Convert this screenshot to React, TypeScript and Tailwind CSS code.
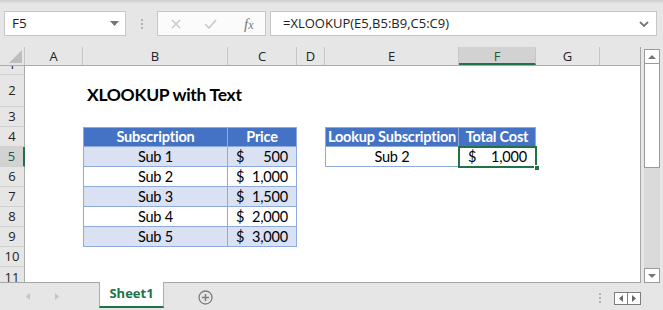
import React from "react";

const UI = { fontFamily: '"Open Sans", "Noto Sans", sans-serif' };
const CELL = { fontFamily: 'Lato, "Liberation Sans", sans-serif', letterSpacing: "-0.2px" };

const colW = [58, 145, 69, 28, 134, 77, 64];
const letters = ["A", "B", "C", "D", "E", "F", "G", "H"];

type CellSpec = {
  content?: React.ReactNode;
  cls?: string;
};

function Money({ v }: { v: string }) {
  return (
    <div className="flex w-full items-center justify-between px-2">
      <span>$</span>
      <span>{v}</span>
    </div>
  );
}

const blue = "bg-[#d9e1f2]";
const bd = "border-[#8ea9db]";

function rowCells(r: number): (CellSpec | null)[] {
  const cells: (CellSpec | null)[] = [null, null, null, null, null, null, null];
  if (r === 2) {
    cells[1] = {
      content: (
        <span className="whitespace-nowrap pl-[4px] pb-[3px] text-[17.5px] font-bold tracking-[-0.3px]" style={{ fontFamily: CELL.fontFamily }}>
          XLOOKUP with Text
        </span>
      ),
      cls: "items-end overflow-visible",
    };
  }
  if (r === 4) {
    const h = `bg-[#4472c4] text-white font-bold justify-center whitespace-nowrap border-b border-r ${bd}`;
    cells[1] = { content: "Subscription", cls: `${h} border-l border-t` };
    cells[2] = { content: "Price", cls: `${h} border-t` };
    cells[4] = { content: "Lookup Subscription", cls: `${h} border-l border-t` };
    cells[5] = { content: "Total Cost", cls: `${h} border-t` };
  }
  const data: Record<number, [string, string]> = {
    5: ["Sub 1", "500"],
    6: ["Sub 2", "1,000"],
    7: ["Sub 3", "1,500"],
    8: ["Sub 4", "2,000"],
    9: ["Sub 5", "3,000"],
  };
  if (data[r]) {
    const bg = r % 2 === 1 ? blue : "bg-white";
    cells[1] = { content: data[r][0], cls: `${bg} justify-center border-l border-b border-r ${bd}` };
    cells[2] = { content: <Money v={data[r][1]} />, cls: `${bg} border-b border-r ${bd}` };
  }
  if (r === 5) {
    cells[4] = { content: "Sub 2", cls: `bg-white justify-center border-l border-b border-r ${bd}` };
    cells[5] = {
      content: (
        <>
          <div className="w-full pl-[1px] pr-[1px]">
            <Money v="1,000" />
          </div>
          <div className="absolute left-[-1px] top-[-1px] h-[22px] w-[79px] border-2 border-[#217346]" />
          <div className="absolute bottom-[-4px] right-[-4px] h-[6px] w-[6px] border border-white bg-[#217346]" />
        </>
      ),
      cls: "relative bg-white",
    };
  }
  return cells;
}

function GridRow({ r, h, align }: { r: number; h: number; align: "top" | "bottom" | "mid" }) {
  const cells = rowCells(r);
  const sel = r === 5;
  return (
    <div className="flex" style={{ height: h }}>
      <div
        className={`flex w-[25px] shrink-0 justify-center overflow-hidden border-b border-r border-b-[#d0d0d0] ${
          sel ? "border-r-2 border-r-[#217346] bg-[#d2d2d2] text-[#1e5b3e]" : "border-r-[#ababab] bg-[#e6e6e6] text-[#222]"
        } ${align === "bottom" ? "items-end" : align === "top" ? "items-start" : "items-center"}`}
        style={UI}
      >
        <div className="flex h-[20px] shrink-0 items-center text-[13px] leading-none">{r}</div>
      </div>
      {colW.map((w, i) => {
        const c = cells[i];
        return (
          <div
            key={i}
            className={`flex shrink-0 items-center text-[14.5px] leading-[18px] text-black ${c?.cls ?? ""}`}
            style={{ width: w, ...CELL }}
          >
            {c?.content}
          </div>
        );
      })}
    </div>
  );
}

function Dots({ className = "" }: { className?: string }) {
  return (
    <div className={`flex flex-col items-center gap-[2px] ${className}`}>
      <div className="h-[2px] w-[2px] bg-[#b4b4b4]" />
      <div className="h-[2px] w-[2px] bg-[#b4b4b4]" />
      <div className="h-[2px] w-[2px] bg-[#b4b4b4]" />
    </div>
  );
}

export default function App() {
  return (
    <div className="relative h-[310px] w-[663px] overflow-hidden bg-[#e6e6e6]">
      {/* Formula bar area */}
      <div className="h-[47px] bg-[linear-gradient(#cfcfcf_0px,#e6e6e6_4px)]">
        <div className="flex pt-[11px]">
          <div className="ml-[4px] flex h-[25px] w-[122px] items-center justify-between border border-[#c6c6c6] bg-white pl-[7px] pr-[6px]" style={UI}>
            <span className="text-[13.5px] text-[#222]">F5</span>
            <svg width="9" height="5" viewBox="0 0 9 5">
              <path d="M0 0 L9 0 L4.5 5 Z" fill="#777" />
            </svg>
          </div>
          <div className="flex w-[31px] items-center justify-center">
            <Dots />
          </div>
          <div className="relative h-[25px] w-[109px] border border-[#c6c6c6] bg-[#fbfbfb]">
            <svg className="absolute left-[13px] top-[7px]" width="10" height="10" viewBox="0 0 10 10">
              <path d="M1 1 L9 9 M9 1 L1 9" stroke="#c8c8c8" strokeWidth="1.4" fill="none" />
            </svg>
            <svg className="absolute left-[46px] top-[7px]" width="13" height="10" viewBox="0 0 13 10">
              <path d="M1 5 L5 9 L12 1" stroke="#c8c8c8" strokeWidth="1.6" fill="none" />
            </svg>
            <span
              className="absolute left-[86px] top-[1px] text-[15px] italic text-[#777]"
              style={{ fontFamily: '"Liberation Serif", serif' }}
            >
              f<span className="text-[12px]">x</span>
            </span>
          </div>
          <div className="ml-[4px] flex h-[25px] w-[387px] items-center justify-between border border-[#c6c6c6] bg-white pl-[12px] pr-[7px]" style={UI}>
            <span className="text-[13px] text-[#222]">=XLOOKUP(E5,B5:B9,C5:C9)</span>
            <svg width="10" height="6" viewBox="0 0 10 6">
              <path d="M1 1 L5 5 L9 1" stroke="#777" strokeWidth="1.8" fill="none" />
            </svg>
          </div>
        </div>
      </div>

      {/* Sheet area */}
      <div className="flex h-[236px]">
        <div className="h-[236px] w-[641px] shrink-0 overflow-hidden border-r border-b border-[#a6a6a6] bg-white">
          {/* column headers */}
          <div className="flex h-[19px] border-b border-[#ababab] bg-[#e6e6e6]" style={UI}>
            <div className="relative w-[25px] shrink-0 border-r border-[#c6c6c6]">
              <svg className="absolute bottom-[2px] right-[2px]" width="13" height="13" viewBox="0 0 13 13">
                <path d="M13 0 L13 13 L0 13 Z" fill="#bdbdbd" />
              </svg>
            </div>
            {colW.map((w, i) => (
              <div
                key={i}
                className={`flex shrink-0 items-center justify-center border-r text-[13px] leading-none ${
                  i === 5
                    ? "border-b-2 border-b-[#217346] border-r-[#c6c6c6] bg-[#d2d2d2] pt-[2px] text-[#1e5b3e]"
                    : "border-[#c6c6c6] text-[#222]"
                }`}
                style={{ width: w }}
              >
                {letters[i]}
              </div>
            ))}
          </div>
          <GridRow r={1} h={9} align="bottom" />
          <GridRow r={2} h={32} align="mid" />
          {[3, 4, 5, 6, 7, 8, 9, 10].map((r) => (
            <GridRow key={r} r={r} h={20} align="mid" />
          ))}
          <GridRow r={11} h={16} align="top" />
        </div>
        {/* vertical scrollbar */}
        <div className="ml-[3px] flex w-[16px] flex-col pt-[2px]">
          <div className="flex h-[15px] w-[16px] items-center justify-center border border-[#9a9a9a] bg-white">
            <svg width="8" height="4" viewBox="0 0 8 4">
              <path d="M0 4 L8 4 L4 0 Z" fill="#777" />
            </svg>
          </div>
          <div className="h-[104px] w-[16px] border border-t-0 border-[#9a9a9a] bg-white" />
          <div className="w-[16px] flex-1 bg-[#dadada]" />
          <div className="flex h-[15px] w-[16px] items-center justify-center border border-[#9a9a9a] bg-white">
            <svg width="8" height="4" viewBox="0 0 8 4">
              <path d="M0 0 L8 0 L4 4 Z" fill="#777" />
            </svg>
          </div>
        </div>
      </div>

      {/* Tab bar */}
      <div className="relative flex h-[27px] items-start">
        <div className="flex h-[27px] w-[99px] items-center">
          <svg className="ml-[26px]" width="4" height="7" viewBox="0 0 4 7">
            <path d="M4 0 L4 7 L0 3.5 Z" fill="#c4c4c4" />
          </svg>
          <svg className="ml-[25px]" width="4" height="7" viewBox="0 0 4 7">
            <path d="M0 0 L0 7 L4 3.5 Z" fill="#c4c4c4" />
          </svg>
        </div>
        <div
          className="mt-[-1px] flex h-[26px] w-[65px] items-center justify-center border-x border-[#ababab] border-b-2 border-b-[#217346] bg-white text-[13px] font-bold text-[#217346]"
          style={UI}
        >
          Sheet1
        </div>
        <div className="ml-[34px] mt-[7px]">
          <svg width="15" height="15" viewBox="0 0 15 15">
            <circle cx="7.5" cy="7.5" r="6.5" fill="none" stroke="#7d7d7d" strokeWidth="1.3" />
            <path d="M7.5 4 L7.5 11 M4 7.5 L11 7.5" stroke="#7d7d7d" strokeWidth="1.5" />
          </svg>
        </div>
        <div className="flex-1" />
        <Dots className="mr-[13px] mt-[10px]" />
        <div className="mr-[22px] mt-[9px] flex h-[13px] w-[27px] border border-[#7d7d7d] bg-white">
          <div className="flex flex-1 items-center justify-center border-r border-[#7d7d7d]">
            <svg width="4" height="7" viewBox="0 0 4 7">
              <path d="M4 0 L4 7 L0 3.5 Z" fill="#666" />
            </svg>
          </div>
          <div className="flex flex-1 items-center justify-center">
            <svg width="4" height="7" viewBox="0 0 4 7">
              <path d="M0 0 L0 7 L4 3.5 Z" fill="#666" />
            </svg>
          </div>
        </div>
      </div>
    </div>
  );
}
